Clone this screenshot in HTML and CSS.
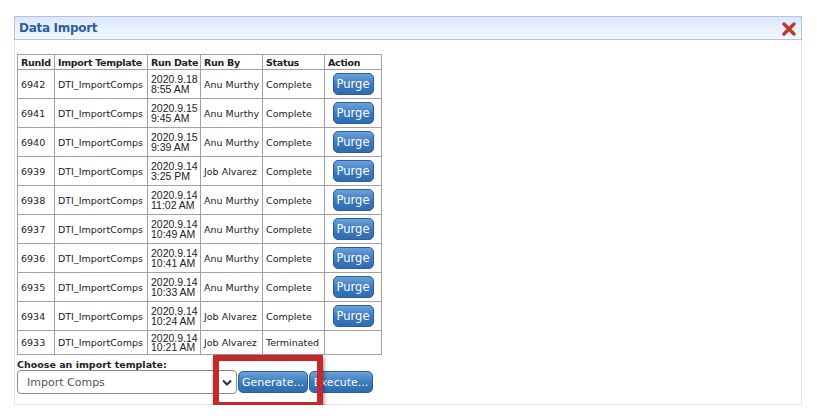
FILE: index.html
```html
<!DOCTYPE html>
<html lang="en">
<head>
    <meta charset="UTF-8">
    <title>Data Import</title>
    <link rel="stylesheet" href="styles.css">
</head>
<body>
    <div class="panel">
        <div class="panel-header">
            <span class="panel-title">Data Import</span>
            <span class="close-btn">
                <svg width="14" height="14" viewBox="0 0 14 14">
                    <path d="M2 2 L12 12 M12 2 L2 12" stroke="#c0392b" stroke-width="3.4" stroke-linecap="round"/>
                </svg>
            </span>
        </div>
        <div class="panel-body">
            <table class="runs">
                <thead>
                    <tr>
                        <th class="c-id">RunId</th>
                        <th class="c-tpl">Import Template</th>
                        <th class="c-date">Run Date</th>
                        <th class="c-by">Run By</th>
                        <th class="c-status">Status</th>
                        <th class="c-action">Action</th>
                    </tr>
                </thead>
                <tbody>
                    <tr><td>6942</td><td>DTI_ImportComps</td><td class="date">2020.9.18<br>8:55 AM</td><td>Anu Murthy</td><td>Complete</td><td class="action"><button class="btn purge">Purge</button></td></tr>
                    <tr><td>6941</td><td>DTI_ImportComps</td><td class="date">2020.9.15<br>9:45 AM</td><td>Anu Murthy</td><td>Complete</td><td class="action"><button class="btn purge">Purge</button></td></tr>
                    <tr><td>6940</td><td>DTI_ImportComps</td><td class="date">2020.9.15<br>9:39 AM</td><td>Anu Murthy</td><td>Complete</td><td class="action"><button class="btn purge">Purge</button></td></tr>
                    <tr><td>6939</td><td>DTI_ImportComps</td><td class="date">2020.9.14<br>3:25 PM</td><td>Job Alvarez</td><td>Complete</td><td class="action"><button class="btn purge">Purge</button></td></tr>
                    <tr><td>6938</td><td>DTI_ImportComps</td><td class="date">2020.9.14<br>11:02 AM</td><td>Anu Murthy</td><td>Complete</td><td class="action"><button class="btn purge">Purge</button></td></tr>
                    <tr><td>6937</td><td>DTI_ImportComps</td><td class="date">2020.9.14<br>10:49 AM</td><td>Anu Murthy</td><td>Complete</td><td class="action"><button class="btn purge">Purge</button></td></tr>
                    <tr><td>6936</td><td>DTI_ImportComps</td><td class="date">2020.9.14<br>10:41 AM</td><td>Anu Murthy</td><td>Complete</td><td class="action"><button class="btn purge">Purge</button></td></tr>
                    <tr><td>6935</td><td>DTI_ImportComps</td><td class="date">2020.9.14<br>10:33 AM</td><td>Anu Murthy</td><td>Complete</td><td class="action"><button class="btn purge">Purge</button></td></tr>
                    <tr><td>6934</td><td>DTI_ImportComps</td><td class="date">2020.9.14<br>10:24 AM</td><td>Job Alvarez</td><td>Complete</td><td class="action"><button class="btn purge">Purge</button></td></tr>
                    <tr class="short"><td>6933</td><td>DTI_ImportComps</td><td class="date">2020.9.14<br>10:21 AM</td><td>Job Alvarez</td><td>Terminated</td><td class="action"></td></tr>
                </tbody>
            </table>

            <div class="template-label">Choose an import template:</div>
            <div class="template-row">
                <div class="select">
                    <span class="select-value">Import Comps</span>
                    <svg class="chevron" width="10" height="7" viewBox="0 0 10 7">
                        <path d="M1 1.5 L5 5.5 L9 1.5" fill="none" stroke="#333" stroke-width="2"/>
                    </svg>
                </div>
                <button class="btn generate">Generate...</button>
                <button class="btn execute">Execute...</button>
                <div class="highlight"></div>
            </div>
        </div>
    </div>
</body>
</html>
```

FILE: styles.css
```css
body {
    margin: 0;
    padding: 0;
    background: #fff;
    font-family: "DejaVu Sans", Verdana, sans-serif;
    font-size: 9.5px;
    color: #222;
}

.panel {
    margin: 16px 0 0 14px;
    width: 788px;
}

.panel-header {
    height: 22px;
    border: 1px solid #b3c3e6;
    background: linear-gradient(#dde8fb, #f4f8fe);
    display: flex;
    align-items: center;
    justify-content: space-between;
    padding: 0 5px 0 4px;
}

.panel-title {
    font-weight: bold;
    font-size: 12px;
    letter-spacing: -0.3px;
    color: #2c5f9f;
}

.close-btn {
    display: flex;
    margin-top: 1px;
}

.panel-body {
    border: 1px solid #e2e2e2;
    border-top: none;
    padding: 14px 2px 10px 2px;
}

.runs {
    border-collapse: collapse;
    border: 1px solid #a2a2a2;
    width: 365px;
    table-layout: fixed;
}

.runs th, .runs td {
    border: 1px solid #a2a2a2;
    padding: 0 3px;
    text-align: left;
    white-space: nowrap;
    overflow: hidden;
}

.runs th {
    height: 14px;
    font-weight: bold;
    letter-spacing: -0.3px;
}

.runs td {
    height: 27px;
}

.runs tr.short td {
    height: 22px;
}

.c-id { width: 30px; }
.c-tpl { width: 86px; }
.c-date { width: 46px; }
.c-by { width: 55px; }
.c-status { width: 55px; }
.c-action { width: 50px; }

.runs td.date {
    font-family: "Liberation Sans", Arial, sans-serif;
    font-size: 10.5px;
    line-height: 9.5px;
    padding-top: 1px;
}

.runs td.action {
    text-align: center;
}

.btn {
    font-family: "DejaVu Sans", Verdana, sans-serif;
    font-size: 11px;
    color: #fff;
    border: 1px solid #2b5f9c;
    border-radius: 5px;
    background: linear-gradient(#6aa2da, #3b78bd 55%, #2f6cb1);
    cursor: pointer;
    padding: 0;
}

.btn.purge {
    display: block;
    width: 41px;
    height: 22px;
    margin: 0 auto;
    font-size: 11.5px;
}

.template-label {
    font-weight: bold;
    margin-top: 5px;
    line-height: 10px;
}

.template-row {
    display: flex;
    align-items: center;
    position: relative;
}

.select {
    height: 22px;
    border: 1px solid #8a8a8a;
    border-radius: 4px;
    display: flex;
    align-items: center;
    justify-content: space-between;
    padding: 0 4px 0 9px;
    width: 205px;
    font-size: 11px;
    color: #555;
}

.chevron {
    margin-top: 1px;
}

.btn.generate {
    width: 70px;
    height: 22px;
    margin-left: 1px;
}

.btn.execute {
    width: 64px;
    height: 22px;
    margin-left: 1px;
}

.highlight {
    position: absolute;
    left: 196px;
    top: -15px;
    width: 98px;
    height: 41px;
    border: 6px solid #c5282a;
    box-shadow: 1px 2px 4px rgba(0, 0, 0, 0.45);
    pointer-events: none;
}
```
